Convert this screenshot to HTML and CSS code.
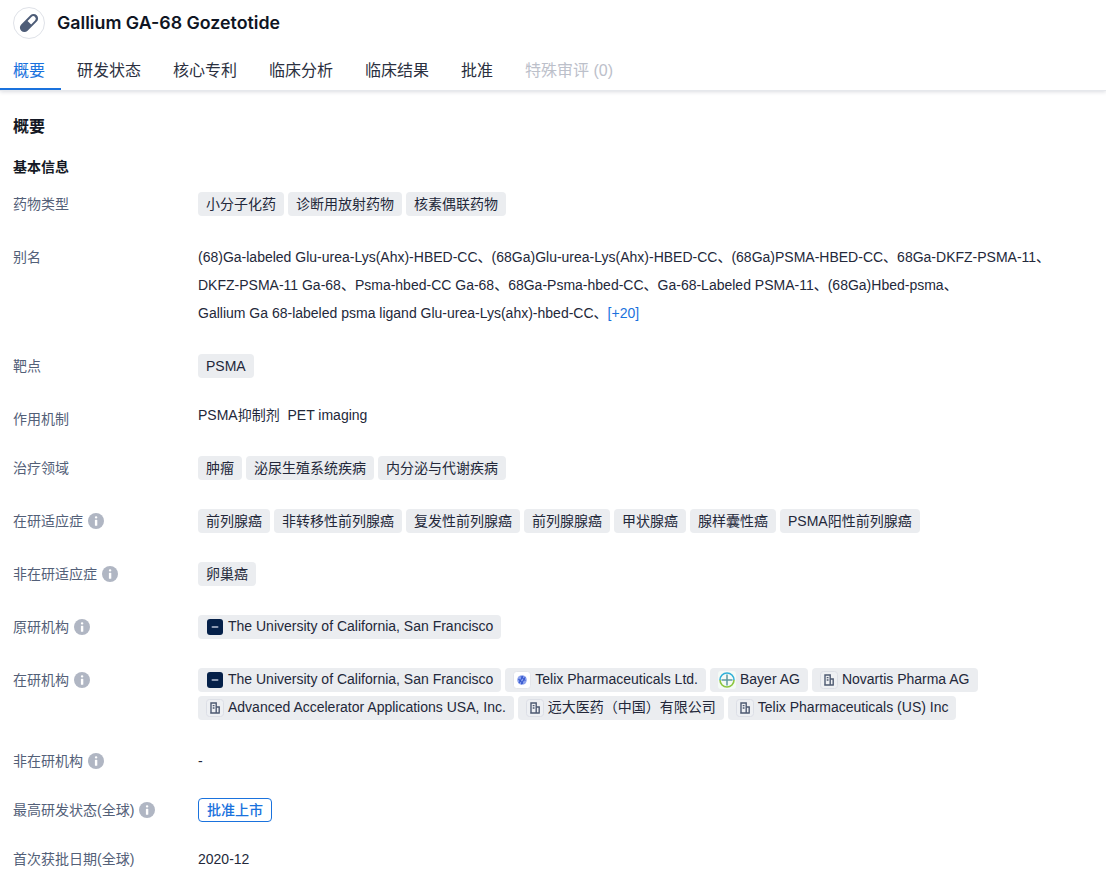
FILE: index.html
```html
<!DOCTYPE html>
<html lang="zh">
<head>
<meta charset="utf-8">
<title>Gallium GA-68 Gozetotide</title>
<link rel="stylesheet" href="styles.css">
</head>
<body>
<svg class="defs" width="0" height="0" aria-hidden="true">
  <symbol id="info" viewBox="0 0 16 16">
    <circle cx="8" cy="8" r="8" fill="#b0b6c3"/>
    <rect x="6.900" y="3.200" width="2.400" height="2.400" rx="1.100" fill="#fff"/>
    <rect x="6.900" y="6.800" width="2.400" height="6" rx=".6" fill="#fff"/>
  </symbol>
  <symbol id="bldg" viewBox="0 0 18 18">
    <rect x=".5" y=".5" width="17" height="17" rx="3" fill="#eef0f3" stroke="#dcdfe6"/>
    <path d="M5 14V4h5.200v10M10.200 8h3v6M4.200 14h9.600M6.700 6.600h1.800M6.700 9h1.800" fill="none" stroke="#4e5a72" stroke-width="1.400"/>
  </symbol>
</svg>
<header class="top">
  <div class="title-row">
    <span class="drug-icon">
      <svg width="24" height="24" viewBox="0 0 24 24"><g transform="rotate(-45 12 12)"><rect x="1" y="7.500" width="22" height="9" rx="4.500" fill="#4e5d78"/><path d="M12.500 9.500H18a2.500 2.500 0 0 1 0 5h-5.500z" fill="#fff"/></g></svg>
    </span>
    <h1 class="title">Gallium GA-68 Gozetotide</h1>
  </div>
  <nav class="tabs">
    <a class="tab active">概要</a>
    <a class="tab">研发状态</a>
    <a class="tab">核心专利</a>
    <a class="tab">临床分析</a>
    <a class="tab">临床结果</a>
    <a class="tab">批准</a>
    <a class="tab disabled">特殊审评 (0)</a>
  </nav>
</header>
<main class="content">
  <h2 class="section">概要</h2>
  <h3 class="subsection">基本信息</h3>

  <div class="row">
    <div class="label">药物类型</div>
    <div class="tags"><span class="tag">小分子化药</span><span class="tag">诊断用放射药物</span><span class="tag">核素偶联药物</span></div>
  </div>
  <div class="row">
    <div class="label label-text">别名</div>
    <div class="text">(68)Ga-labeled Glu-urea-Lys(Ahx)-HBED-CC、(68Ga)Glu-urea-Lys(Ahx)-HBED-CC、(68Ga)PSMA-HBED-CC、68Ga-DKFZ-PSMA-11、<br>DKFZ-PSMA-11 Ga-68、Psma-hbed-CC Ga-68、68Ga-Psma-hbed-CC、Ga-68-Labeled PSMA-11、(68Ga)Hbed-psma、<br>Gallium Ga 68-labeled psma ligand Glu-urea-Lys(ahx)-hbed-CC、<a class="more">[+20]</a></div>
  </div>
  <div class="row">
    <div class="label">靶点</div>
    <div class="tags"><span class="tag">PSMA</span></div>
  </div>
  <div class="row">
    <div class="label label-low">作用机制</div>
    <div class="plain">PSMA抑制剂&nbsp; PET imaging</div>
  </div>
  <div class="row row-tall">
    <div class="label">治疗领域</div>
    <div class="tags"><span class="tag">肿瘤</span><span class="tag">泌尿生殖系统疾病</span><span class="tag">内分泌与代谢疾病</span></div>
  </div>
  <div class="row row-tall">
    <div class="label">在研适应症<svg class="info"><use href="#info"/></svg></div>
    <div class="tags"><span class="tag">前列腺癌</span><span class="tag">非转移性前列腺癌</span><span class="tag">复发性前列腺癌</span><span class="tag">前列腺腺癌</span><span class="tag">甲状腺癌</span><span class="tag">腺样囊性癌</span><span class="tag">PSMA阳性前列腺癌</span></div>
  </div>
  <div class="row row-tall">
    <div class="label">非在研适应症<svg class="info"><use href="#info"/></svg></div>
    <div class="tags"><span class="tag">卵巢癌</span></div>
  </div>
  <div class="row row-tall">
    <div class="label">原研机构<svg class="info"><use href="#info"/></svg></div>
    <div class="tags"><span class="tag org"><svg class="logo" viewBox="0 0 18 18"><rect x="1" y="1" width="16" height="16" rx="3" fill="#052049"/><rect x="5.500" y="8" width="7" height="2" rx="1" fill="#8d9ab3"/></svg>The University of California, San Francisco</span></div>
  </div>
  <div class="row row-tall">
    <div class="label">在研机构<svg class="info"><use href="#info"/></svg></div>
    <div class="tags">
      <span class="tag org"><svg class="logo" viewBox="0 0 18 18"><rect x="1" y="1" width="16" height="16" rx="3" fill="#052049"/><rect x="5.500" y="8" width="7" height="2" rx="1" fill="#8d9ab3"/></svg>The University of California, San Francisco</span>
      <span class="tag org"><svg class="logo" viewBox="0 0 18 18"><rect x=".5" y=".5" width="17" height="17" rx="3" fill="#fff" stroke="#e3e5ea"/><circle cx="9" cy="9" r="4.800" fill="#8fa4ee"/><path d="M6 12L10 5M8.200 13.200l4-7M5.500 8l4.500 4.600M7.800 5.300l4.600 4.400" fill="none" stroke="#3557cf" stroke-width="1.100"/></svg>Telix Pharmaceuticals Ltd.</span>
      <span class="tag org"><svg class="logo" viewBox="0 0 18 18"><rect width="18" height="18" rx="3" fill="#f4faf6"/><path d="M2 9a7 7 0 0 1 14 0" fill="none" stroke="#2fb0d8" stroke-width="1.600"/><path d="M16 9A7 7 0 0 1 2 9" fill="none" stroke="#8cc63f" stroke-width="1.600"/><path d="M9 3.500v11M3.500 9h11" stroke="#5d9aa0" stroke-width="1.500"/></svg>Bayer AG</span>
      <span class="tag org"><svg class="logo"><use href="#bldg"/></svg>Novartis Pharma AG</span>
      <span class="tag org"><svg class="logo"><use href="#bldg"/></svg>Advanced Accelerator Applications USA, Inc.</span>
      <span class="tag org"><svg class="logo"><use href="#bldg"/></svg>远大医药（中国）有限公司</span>
      <span class="tag org"><svg class="logo"><use href="#bldg"/></svg>Telix Pharmaceuticals (US) Inc</span>
    </div>
  </div>
  <div class="row row-short">
    <div class="label">非在研机构<svg class="info"><use href="#info"/></svg></div>
    <div class="plain plain-mid">-</div>
  </div>
  <div class="row row-short">
    <div class="label">最高研发状态(全球)<svg class="info"><use href="#info"/></svg></div>
    <div class="tags"><span class="status">批准上市</span></div>
  </div>
  <div class="row">
    <div class="label">首次获批日期(全球)</div>
    <div class="plain plain-mid">2020-12</div>
  </div>
</main>
</body>
</html>
```

FILE: styles.css
```css
* { box-sizing: border-box; }
html, body { margin: 0; padding: 0; }
body {
  height: 884px;
  overflow: hidden;
  background: #fff;
  color: #23283a;
  font: 14px/20px "Liberation Sans", "Noto Sans CJK SC", sans-serif;
}
.defs { position: absolute; }
.top {
  height: 91px;
  box-shadow: 0 1px 4px rgba(30, 40, 70, .16);
  border-bottom: 1px solid #e6e8ec;
}
.title-row {
  display: flex;
  align-items: center;
  gap: 12px;
  height: 46px;
  padding-left: 13px;
}
.drug-icon {
  display: flex;
  align-items: center;
  justify-content: center;
  width: 32px;
  height: 32px;
  border: 1px solid #dfe2e8;
  border-radius: 50%;
}
.title {
  margin: 0;
  font: 600 17.800px/24px Inter, "Liberation Sans", sans-serif;
  color: #0f1523;
}
.tabs { display: flex; height: 44px; }
.tab {
  padding: 14px 16px 0;
  font-size: 16px;
  line-height: 22px;
  color: #2b3040;
}
.tab:first-child { padding-left: 13px; }
.tab.active { color: #1a72dd; border-bottom: 2px solid #1a72dd; }
.tab.disabled { color: #bcc0ca; }
.content { padding: 0 13px; }
.section {
  margin: 25px 0 0;
  font-size: 16px;
  line-height: 22px;
  font-weight: 700;
  color: #141824;
}
.subsection {
  margin: 19px 0 15px;
  font-size: 14px;
  line-height: 20px;
  font-weight: 700;
  color: #141824;
}
.row {
  display: grid;
  grid-template-columns: 185px 1fr;
  margin-bottom: 27px;
}
.row-tall { margin-bottom: 29px; }
.row-short { margin-bottom: 25px; }
.label {
  display: flex;
  align-items: center;
  gap: 5px;
  height: 24px;
  color: #536078;
}
.label-text { height: 28px; }
.label-low { padding-top: 4px; }
.info { width: 16px; height: 16px; flex: none; }
.tags { display: flex; flex-wrap: wrap; gap: 4px; }
.tag {
  display: inline-flex;
  align-items: center;
  height: 24px;
  padding: 0 8px;
  border-radius: 4px;
  background: #ebedf0;
  color: #23283a;
}
.org { gap: 4px; line-height: 18px; padding-bottom: 2px; }
.logo { width: 18px; height: 18px; flex: none; margin-top: 2px; }
.text { line-height: 28px; color: #23283a; }
.more { color: #1a72dd; }
.plain { height: 24px; line-height: 20px; }
.plain-mid { line-height: 24px; }
.status {
  display: inline-flex;
  align-items: center;
  height: 24px;
  padding: 0 8px;
  border: 1px solid #1a72dd;
  border-radius: 4px;
  color: #1a72dd;
  font-weight: 500;
}
```
